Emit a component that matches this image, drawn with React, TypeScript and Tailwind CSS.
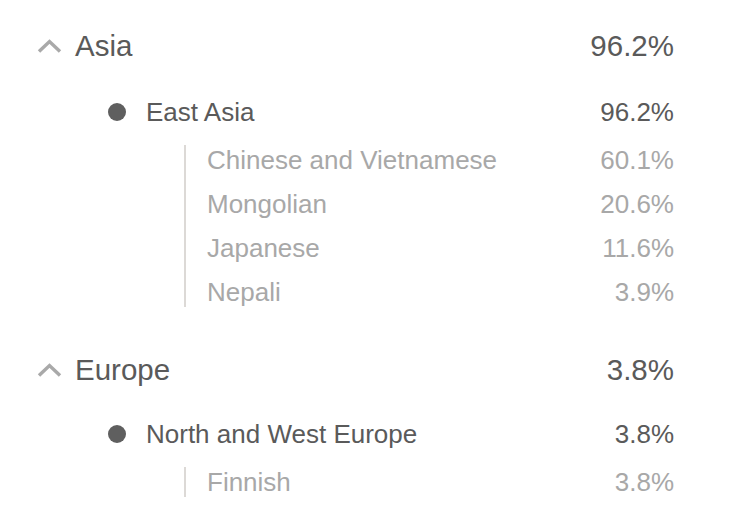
import React from "react";

type Sub = { name: string; pct: string };
type Group = { name: string; pct: string; subs: Sub[] };
type Region = { name: string; pct: string; mt: string; gmt: string; groups: Group[] };

const data: Region[] = [
  {
    name: "Asia",
    pct: "96.2%",
    mt: "",
    gmt: "mt-[26px]",
    groups: [
      {
        name: "East Asia",
        pct: "96.2%",
        subs: [
          { name: "Chinese and Vietnamese", pct: "60.1%" },
          { name: "Mongolian", pct: "20.6%" },
          { name: "Japanese", pct: "11.6%" },
          { name: "Nepali", pct: "3.9%" },
        ],
      },
    ],
  },
  {
    name: "Europe",
    pct: "3.8%",
    mt: "mt-[36px]",
    gmt: "mt-[24px]",
    groups: [
      {
        name: "North and West Europe",
        pct: "3.8%",
        subs: [{ name: "Finnish", pct: "3.8%" }],
      },
    ],
  },
];

function Chevron() {
  return (
    <svg width="25" height="14" viewBox="0 0 25 14" className="shrink-0">
      <path d="M2 12.5 L12.5 2.5 L23 12.5" fill="none" stroke="#a9a9a9" strokeWidth="3.4" />
    </svg>
  );
}

export default function App() {
  return (
    <div
      className="w-[734px] h-[515px] bg-white pl-[37px] pr-[60px] pt-[26px]"
      style={{ fontFamily: '"Liberation Sans", Arial, sans-serif' }}
    >
      {data.map((r) => (
        <div key={r.name} className={r.mt}>
          <div className="flex items-center h-[40px] text-[29.5px] text-[#5a5a5a]">
            <Chevron />
            <span className="ml-[13px]">{r.name}</span>
            <span className="ml-auto">{r.pct}</span>
          </div>
          {r.groups.map((g) => (
            <div key={g.name} className={r.gmt}>
              <div className="flex items-center h-[40px] text-[26px] text-[#5a5a5a]">
                <span className="ml-[71px] w-[18px] h-[18px] rounded-full bg-[#5f5f5f] shrink-0" />
                <span className="ml-[20px]">{g.name}</span>
                <span className="ml-auto">{g.pct}</span>
              </div>
              <div className="flex mt-[6px]">
                <div className="ml-[147px] w-[2px] my-[7px] bg-[#dcd9d6] shrink-0" />
                <div className="flex-1 pl-[21px]">
                  {g.subs.map((s) => (
                    <div
                      key={s.name}
                      className="flex items-center h-[44px] text-[26px] text-[#a8a8a8]"
                    >
                      <span>{s.name}</span>
                      <span className="ml-auto">{s.pct}</span>
                    </div>
                  ))}
                </div>
              </div>
            </div>
          ))}
        </div>
      ))}
    </div>
  );
}
